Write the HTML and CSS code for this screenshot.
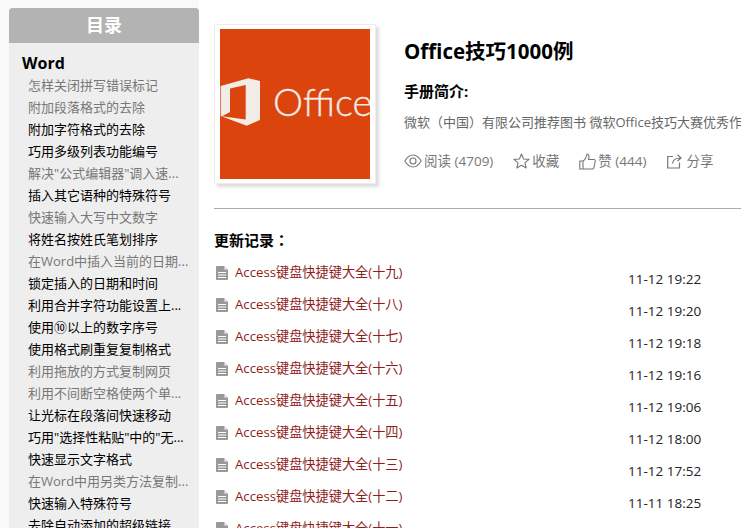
FILE: index.html
```html
<!DOCTYPE html>
<html lang="zh">
<head>
<meta charset="utf-8">
<title>Office技巧1000例</title>
<link rel="stylesheet" href="styles.css">
</head>
<body>
<div class="page">
  <aside class="sidebar">
    <div class="side-head">目录</div>
    <div class="side-body">
      <div class="chapter">Word</div>
      <ul class="toc">
        <li class="dim">怎样关闭拼写错误标记</li>
        <li class="dim">附加段落格式的去除</li>
        <li>附加字符格式的去除</li>
        <li>巧用多级列表功能编号</li>
        <li class="dim">解决"公式编辑器"调入速...</li>
        <li>插入其它语种的特殊符号</li>
        <li class="dim">快速输入大写中文数字</li>
        <li>将姓名按姓氏笔划排序</li>
        <li class="dim">在Word中插入当前的日期...</li>
        <li>锁定插入的日期和时间</li>
        <li>利用合并字符功能设置上...</li>
        <li>使用⑩以上的数字序号</li>
        <li>使用格式刷重复复制格式</li>
        <li class="dim">利用拖放的方式复制网页</li>
        <li class="dim">利用不间断空格使两个单...</li>
        <li>让光标在段落间快速移动</li>
        <li>巧用"选择性粘贴"中的"无...</li>
        <li>快速显示文字格式</li>
        <li class="dim">在Word中用另类方法复制...</li>
        <li>快速输入特殊符号</li>
        <li>去除自动添加的超级链接</li>
      </ul>
    </div>
  </aside>
  <main class="main">
    <section class="hero">
      <div class="cover">
        <svg class="cover-art" viewBox="0 0 150 150" width="150" height="150">
          <rect width="150" height="150" fill="#dc440e"/>
          <path fill-rule="evenodd" d="M0.700 57 L28.300 49.300 L40 52 V91 L26.700 96.700 L0.700 87 Z M10 59.500 L25.700 56 V90.500 L2 87.300 L10 83 Z" fill="#f1ece8"/>
          <text x="53" y="87" class="cover-text">Office</text>
        </svg>
      </div>
      <div class="info">
        <h1 class="title">Office技巧1000例</h1>
        <div class="intro-label">手册简介:</div>
        <p class="intro">微软<span class="punct" lang="zh-Hant">（</span>中国<span class="punct" lang="zh-Hant">）</span>有限公司推荐图书 微软Office技巧大赛优秀作品精选</p>
        <div class="actions">
          <span class="action">
            <svg class="ico" viewBox="0 0 18 14" width="18" height="14"><path d="M0.800 7 C3.500 2.500 6.500 1 9 1 C11.500 1 14.500 2.500 17.200 7 C14.500 11.500 11.500 13 9 13 C6.500 13 3.500 11.500 0.800 7 Z" fill="none" stroke="#777" stroke-width="1.1"/><circle cx="9" cy="7" r="3" fill="none" stroke="#777" stroke-width="1.1"/></svg>
            <span class="gap-s">阅读 (4709)</span>
          </span>
          <span class="action">
            <svg class="ico" viewBox="0 0 17 16" width="17" height="16"><path d="M8.500 1 L10.600 6 L16 6.400 L11.900 9.800 L13.200 15 L8.500 12.200 L3.800 15 L5.100 9.800 L1 6.400 L6.400 6 Z" fill="none" stroke="#777" stroke-width="1.1" stroke-linejoin="round"/></svg>
            <span class="gap-s">收藏</span>
          </span>
          <span class="action">
            <svg class="ico" viewBox="0 0 17 17" width="17" height="17"><path d="M0.800 8 H4 V16 H0.800 Z M4 8 C6.500 6.500 7.500 4 8 1 C10 1 10.500 3.500 9.500 6.500 H15 C16.200 6.500 16.400 7.500 16.200 8.500 L14.800 14.800 C14.600 15.700 14 16 13 16 H4" fill="none" stroke="#777" stroke-width="1.1" stroke-linejoin="round"/></svg>
            <span class="gap-s">赞 (444)</span>
          </span>
          <span class="action">
            <svg class="ico" viewBox="0 0 15 15" width="15" height="15"><path d="M6 2.500 H0.700 V14 H12.500 V8.500 M5.500 9.500 C6 6 8.500 4 13.500 4 M10.500 0.800 L14 4 L10.500 7" fill="none" stroke="#777" stroke-width="1.2"/></svg>
            <span class="gap-l">分享</span>
          </span>
        </div>
      </div>
    </section>
    <h2 class="log-head">更新记录<span class="punct" lang="zh-Hant">：</span></h2>
    <ul class="log">
      <li class="log-row"><svg class="doc" viewBox="0 0 12 14" width="12" height="14"><use href="#doc-shape"/></svg><a class="log-link">Access键盘快捷键大全(十九)</a><time class="log-time">11-12 19:22</time></li>
      <li class="log-row"><svg class="doc" viewBox="0 0 12 14" width="12" height="14"><use href="#doc-shape"/></svg><a class="log-link">Access键盘快捷键大全(十八)</a><time class="log-time">11-12 19:20</time></li>
      <li class="log-row"><svg class="doc" viewBox="0 0 12 14" width="12" height="14"><use href="#doc-shape"/></svg><a class="log-link">Access键盘快捷键大全(十七)</a><time class="log-time">11-12 19:18</time></li>
      <li class="log-row"><svg class="doc" viewBox="0 0 12 14" width="12" height="14"><use href="#doc-shape"/></svg><a class="log-link">Access键盘快捷键大全(十六)</a><time class="log-time">11-12 19:16</time></li>
      <li class="log-row"><svg class="doc" viewBox="0 0 12 14" width="12" height="14"><use href="#doc-shape"/></svg><a class="log-link">Access键盘快捷键大全(十五)</a><time class="log-time">11-12 19:06</time></li>
      <li class="log-row"><svg class="doc" viewBox="0 0 12 14" width="12" height="14"><use href="#doc-shape"/></svg><a class="log-link">Access键盘快捷键大全(十四)</a><time class="log-time">11-12 18:00</time></li>
      <li class="log-row"><svg class="doc" viewBox="0 0 12 14" width="12" height="14"><use href="#doc-shape"/></svg><a class="log-link">Access键盘快捷键大全(十三)</a><time class="log-time">11-12 17:52</time></li>
      <li class="log-row"><svg class="doc" viewBox="0 0 12 14" width="12" height="14"><use href="#doc-shape"/></svg><a class="log-link">Access键盘快捷键大全(十二)</a><time class="log-time">11-11 18:25</time></li>
      <li class="log-row"><svg class="doc" viewBox="0 0 12 14" width="12" height="14"><use href="#doc-shape"/></svg><a class="log-link">Access键盘快捷键大全(十一)</a></li>
    </ul>
    <svg class="defs" width="0" height="0"><defs><path id="doc-shape" fill-rule="evenodd" fill="#999" d="M1 0 H8 L12 4 V13 Q12 14 11 14 H1 Q0 14 0 13 V1 Q0 0 1 0 Z M2 6 V7 H10 V6 Z M2 8.500 V9.500 H10 V8.500 Z M2 11 V12 H10 V11 Z M8.500 1 V3.500 H11 Z"/></defs></svg>
  </main>
</div>
</body>
</html>
```
FILE: styles.css
```css
* { box-sizing: border-box; }
html, body { margin: 0; padding: 0; height: 100%; overflow: hidden; }
body {
  background: #f9f9f9;
  font-family: "Open Sans", "Noto Sans CJK SC", sans-serif;
  color: #000;
}
.page { display: flex; padding: 8px 0 0 9px; height: 528px; overflow: hidden; }
.sidebar { width: 190px; flex: none; background: #eee; border-radius: 4px 4px 0 0; overflow: hidden; }
.side-head {
  height: 35px; line-height: 35px; text-align: center;
  background: #b3b3b3; color: #fff; font-size: 18px; font-weight: 700;
}
.side-body { padding: 9px 0 0 13px; }
.chapter { font-size: 16px; font-weight: 700; line-height: 22px; }
.toc { list-style: none; margin: 0; padding: 0 0 0 6px; }
.toc li { font-size: 13px; line-height: 22px; white-space: nowrap; }
.toc .dim { color: #777; }

.main { flex: 1; min-width: 0; background: #fff; margin-top: -8px; padding: 24px 0 0 15px; overflow: hidden; }
.hero { display: flex; height: 185px; border-bottom: 1px solid #aaa; }
.cover {
  width: 162px; height: 160px; flex: none; padding: 4px 5px;
  background: #fff; border: 1px solid #eee; box-shadow: 3px 3px 3px #ddd;
}
.cover-art { display: block; }
.cover-text { font-family: Lato, sans-serif; font-weight: 300; font-size: 38px; fill: #f3ece8; stroke: #f3ece8; stroke-width: 0.3px; }
.info { margin-left: 28px; min-width: 0; flex: 1; white-space: nowrap; }
.title { margin: 11px 0 0; font-size: 20.500px; line-height: 32px; font-weight: 700; }
.intro-label { margin-top: 14px; font-size: 15px; line-height: 20px; font-weight: 700; }
.intro { margin: 11px 0 0; font-size: 13px; line-height: 20px; color: #666; overflow: hidden; }
.punct { font-family: "Noto Sans CJK TC", sans-serif; }
.actions { display: flex; margin-top: 19px; font-size: 13.500px; line-height: 20px; color: #777; }
.action { display: inline-flex; align-items: center; margin-right: 20px; }
.gap-s { margin-left: 2px; }
.gap-l { margin-left: 5px; }
.log-head { margin: 21px 0 0; font-size: 15px; line-height: 20px; font-weight: 700; }
.log { list-style: none; margin: 12px 0 0; padding: 0 0 0 2px; }
.log-row { display: flex; height: 32px; }
.doc { flex: none; margin-top: 4px; }
.log-link { width: 393px; margin-left: 7px; font-size: 13.200px; line-height: 20px; color: #8f1d1d; white-space: nowrap; }
.log-time { margin-top: 7px; font-size: 13.500px; line-height: 20px; color: #222; white-space: nowrap; }
.defs { position: absolute; }
```
